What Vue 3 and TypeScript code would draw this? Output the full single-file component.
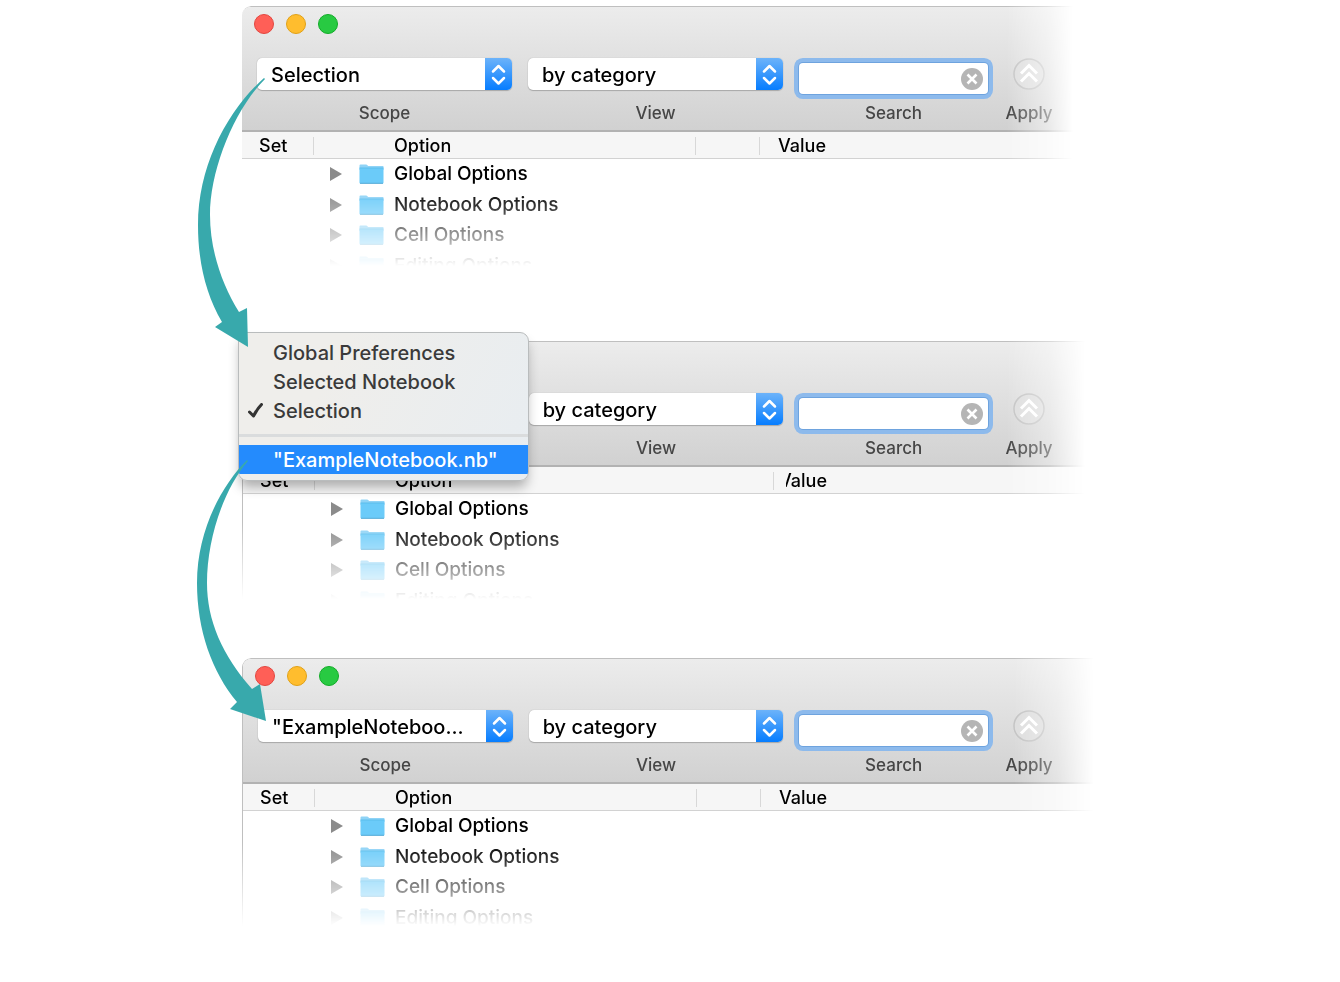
<script setup lang="ts">
interface PanelState {
  id: string
  kind: 'first' | 'second' | 'third'
  scope: string | null
}

const panels: PanelState[] = [
  { id: 'p1', kind: 'first', scope: 'Selection' },
  { id: 'p2', kind: 'second', scope: null },
  { id: 'p3', kind: 'third', scope: '"ExampleNoteboo...' },
]

const groups: string[] = ['Global Options', 'Notebook Options', 'Cell Options', 'Editing Options']
const scopes: string[] = ['Global Preferences', 'Selected Notebook', 'Selection']
</script>

<template>
  <main class="figure">
    <section v-for="p in panels" :key="p.id" class="step" :class="p.kind">
      <div class="window">
        <header class="toolbar">
          <div class="lights">
            <template v-if="p.scope">
              <button class="light red" type="button" aria-label="Close"></button>
              <button class="light yellow" type="button" aria-label="Minimize"></button>
              <button class="light green" type="button" aria-label="Zoom"></button>
            </template>
          </div>
          <div class="controls">
            <div class="control">
              <template v-if="p.scope">
                <div class="slot">
                  <div class="popup">
                    <select :id="p.id + '-scope'">
                      <option>{{ p.scope }}</option>
                    </select>
                    <svg class="stepper" viewBox="0 0 27 32" aria-hidden="true">
                      <path d="M8 13.500 13.500 8 19 13.500M8 20l5.500 5.500L19 20" />
                    </svg>
                  </div>
                </div>
                <label :for="p.id + '-scope'">Scope</label>
              </template>
            </div>
            <div class="control">
              <div class="slot">
                <div class="popup">
                  <select :id="p.id + '-view'">
                    <option>by category</option>
                  </select>
                  <svg class="stepper" viewBox="0 0 27 32" aria-hidden="true">
                    <path d="M8 13.500 13.500 8 19 13.500M8 20l5.500 5.500L19 20" />
                  </svg>
                </div>
              </div>
              <label :for="p.id + '-view'">View</label>
            </div>
            <div class="control">
              <div class="slot">
                <div class="search">
                  <input :id="p.id + '-search'" type="text" />
                  <button class="clear" type="button" aria-label="Clear">
                    <svg viewBox="0 0 22 22" aria-hidden="true">
                      <circle cx="11" cy="11" r="11" fill="#b5b5b5" />
                      <path d="M6.500 6.500l9 9M15.500 6.500l-9 9" stroke="#fff" stroke-width="2.600" />
                    </svg>
                  </button>
                </div>
              </div>
              <label :for="p.id + '-search'">Search</label>
            </div>
            <div class="control">
              <div class="slot">
                <button :id="p.id + '-apply'" class="apply" type="button">
                  <svg viewBox="0 0 32 32" aria-hidden="true">
                    <circle cx="16" cy="16" r="15" fill="#dedede" stroke="#c4c4c4" stroke-width="1.500" />
                    <path d="M8 15.500l8-8 8 8M8 23.500l8-8 8 8" fill="none" stroke="#fff" stroke-width="3" />
                  </svg>
                </button>
              </div>
              <label :for="p.id + '-apply'">Apply</label>
            </div>
          </div>
        </header>

        <table class="options">
          <colgroup>
            <col class="col-set" />
            <col :class="p.scope ? 'col-option' : 'col-option-wide'" />
            <col v-if="p.scope" class="col-gap" />
            <col />
          </colgroup>
          <thead>
            <tr>
              <th class="set">Set</th>
              <th class="option">Option</th>
              <th v-if="p.scope"></th>
              <th class="value"><span>Value</span></th>
            </tr>
          </thead>
          <tbody>
            <tr v-for="g in groups" :key="g">
              <td></td>
              <td :colspan="p.scope ? 3 : 2">
                <div class="entry">
                  <button class="disclose" type="button" :aria-label="'Expand ' + g">
                    <svg viewBox="0 0 12 14" aria-hidden="true"><path d="M0 0 12 7 0 14z" fill="#8b8b8b" /></svg>
                  </button>
                  <svg class="folder" viewBox="0 0 25 20" aria-hidden="true">
                    <path d="M.5 1.500Q.5.500 1.500.500H7q1 0 1.500.800l.500.700H24q.5 0 .5.700V6H.5z" fill="#8fd3f6" />
                    <rect x=".5" y="4" width="24" height="15.500" rx=".8" fill="#6bcbf9" />
                    <path d="M.5 4H24.500" stroke="#5bbdec" />
                    <path d="M1 19.300H24" stroke="#58acd6" />
                  </svg>
                  <span>{{ g }}</span>
                </div>
              </td>
            </tr>
          </tbody>
        </table>
      </div>

      <div v-if="!p.scope" class="menu" role="menu">
        <button
          v-for="s in scopes"
          :key="s"
          class="item"
          type="button"
          role="menuitemradio"
          :aria-checked="s === 'Selection'"
        >
          <span class="tick">
            <svg v-if="s === 'Selection'" viewBox="0 0 15 15" aria-hidden="true">
              <path d="M1.500 9 5.500 13Q9 6 13.500 1.500" fill="none" stroke="#333" stroke-width="3" stroke-linecap="round" stroke-linejoin="round" />
            </svg>
          </span>
          {{ s }}
        </button>
        <hr />
        <button class="item active" type="button" role="menuitemradio" aria-checked="false">
          <span class="tick"></span>"ExampleNotebook.nb"
        </button>
      </div>
    </section>

    <svg class="arrows" viewBox="0 0 100 740" aria-hidden="true">
      <g transform="translate(-180 0)" fill="#38a9ac">
        <path d="M264 78C228 110 198 165 198 225 198 262 206 295 222 322L215 327 248 347 247 308 239 312C222 285 210 250 210 215 210 170 234 110 265 79Z" />
        <path d="M247 460C222 485 197 530 197 583 197 630 212 672 237 702L230 709 266 721 260 684 252 689C222 655 207 620 207 583 207 540 223 490 248 461Z" />
      </g>
    </svg>
  </main>
</template>

<style>
body {
  margin: 0;
  background: #fff;
}
</style>

<style scoped>
.figure {
  position: relative;
  box-sizing: border-box;
  min-height: 100vh;
  padding: 6px 247px 40px 242px;
  font-family: Inter, 'Liberation Sans', sans-serif;
  font-size: 19px;
  font-weight: 450;
  color: #000;
}
.step {
  position: relative;
  min-width: 720px;
}
.second {
  margin-top: 60px;
}
.third {
  margin-top: 42px;
}
.window {
  box-sizing: border-box;
  border-top: 1px solid #bfbfbf;
  border-left: 1px solid #bfbfbf;
  border-radius: 9px 0 0 0;
  overflow: hidden;
  mask-image: linear-gradient(to right, #000 765px, rgba(0, 0, 0, 0.5) 805px, transparent 831px),
    linear-gradient(to bottom, #000 184px, transparent 260px);
  mask-composite: intersect;
}
.first .window {
  border-left: 0;
}
.second .window {
  mask-image: linear-gradient(to right, #000 765px, rgba(0, 0, 0, 0.6) 808px, transparent 843px),
    linear-gradient(to bottom, #000 182px, transparent 258px);
}
.third .window {
  mask-image: linear-gradient(to right, #000 772px, rgba(0, 0, 0, 0.6) 815px, transparent 852px),
    linear-gradient(to bottom, #000 185px, transparent 268px);
}
.toolbar {
  box-sizing: border-box;
  height: 125px;
  padding: 7px 39px 0 15px;
  border-bottom: 2px solid #b2b2b2;
  background: linear-gradient(#ececec, #d1d1d1);
}
.lights {
  display: flex;
  gap: 12px;
  height: 44px;
  margin-left: -3px;
}
.light {
  width: 20px;
  height: 20px;
  padding: 0;
  border: 1px solid;
  border-radius: 50%;
}
.red {
  background: #ff5f57;
  border-color: #e2463f;
}
.yellow {
  background: #ffbd2e;
  border-color: #e1a116;
}
.green {
  background: #28ca42;
  border-color: #12ac28;
}
.controls {
  display: grid;
  grid-template-columns: 255fr 255fr 189fr 50px;
  column-gap: 16px;
}
.control {
  min-width: 0;
  text-align: center;
}
.slot {
  height: 43px;
}
.control label {
  display: block;
  font-size: 17px;
  line-height: 24px;
  color: #464646;
}
.popup {
  display: grid;
  grid-template-columns: 1fr 27px;
  height: 32px;
  border-radius: 5px;
  background: #fff;
  box-shadow: 0 0 1px #a0a0a0, 0 1px 1px #a8a8a8;
  overflow: hidden;
}
.popup select {
  grid-area: 1 / 1 / 2 / 3;
  appearance: none;
  width: 100%;
  padding: 1px 30px 0 14px;
  border: 0;
  background: transparent;
  font: inherit;
  font-size: 20px;
  color: #000;
}
.stepper {
  grid-area: 1 / 2 / 2 / 3;
  width: 27px;
  height: 32px;
  background: linear-gradient(#6cb3fa, #067dff);
  pointer-events: none;
}
.stepper path {
  fill: none;
  stroke: #fff;
  stroke-width: 2.500;
  stroke-linecap: round;
  stroke-linejoin: round;
}
.search {
  display: flex;
  align-items: center;
  height: 31px;
  margin-top: 5px;
  padding-right: 5px;
  box-sizing: border-box;
  border-radius: 4px;
  background: #fff;
  box-shadow: 0 0 0 1px #6ea3de, 0 0 0 5px #8dbaec;
}
.slot:has(.search) {
  display: flow-root;
}
.search input {
  flex: 1;
  min-width: 0;
  padding: 0 6px;
  border: 0;
  outline: 0;
  background: transparent;
  font: inherit;
}
.clear,
.apply,
.disclose {
  display: block;
  padding: 0;
  border: 0;
  background: none;
}
.clear {
  width: 22px;
  height: 22px;
}
.apply {
  width: 32px;
  height: 32px;
  margin: 0 auto;
}
.clear svg,
.apply svg,
.disclose svg {
  display: block;
}
.options {
  width: 100%;
  table-layout: fixed;
  border-collapse: separate;
  border-spacing: 0;
}
.col-set {
  width: 72px;
}
.col-option {
  width: 382px;
}
.col-option-wide {
  width: 459px;
}
.col-gap {
  width: 64px;
}
.options th {
  height: 27px;
  box-sizing: border-box;
  padding: 2px 0 0;
  border-bottom: 1px solid #d2d2d2;
  background: linear-gradient(#d8d8d8, #d8d8d8) right 5px / 1px 18px no-repeat, #f6f6f6;
  font-size: 18px;
  font-weight: 450;
  line-height: 24px;
  text-align: left;
}
.options .set {
  padding-left: 17px;
}
.options .option {
  padding-left: 80px;
}
.options .value {
  padding-left: 18px;
  background: #f6f6f6;
}
.second .value {
  padding-left: 5px;
}
.second .value span {
  display: inline-block;
  clip-path: inset(0 0 0 7px);
}
.options td {
  height: 30px;
  padding: 0;
}
.options tr:nth-child(even) td {
  height: 31px;
}
.entry {
  display: flex;
  align-items: center;
  padding-left: 16px;
  line-height: 30px;
}
.disclose {
  width: 12px;
  height: 14px;
  margin-right: 17px;
}
.folder {
  width: 25px;
  height: 20px;
  margin-right: 10px;
}
.menu {
  position: absolute;
  top: -9px;
  left: -4px;
  box-sizing: border-box;
  width: 291px;
  padding: 5px 0 6px;
  border: 1px solid #b9bcbd;
  border-radius: 0 9px 9px 9px;
  background: linear-gradient(115deg, #efeeeb 30%, #e8edf1);
  box-shadow: 0 8px 12px -2px rgba(0, 0, 0, 0.3);
  overflow: hidden;
}
.item {
  display: flex;
  align-items: center;
  width: 100%;
  height: 29px;
  padding: 0 0 0 9px;
  border: 0;
  background: none;
  font: inherit;
  font-size: 20px;
  color: #3a3a3a;
  white-space: nowrap;
}
.item.active {
  background: #248bfd;
  color: #fff;
}
.tick {
  width: 15px;
  margin-right: 10px;
}
.tick svg {
  display: block;
  width: 15px;
  height: 15px;
}
.menu hr {
  height: 3px;
  margin: 9px 0 8px;
  border: 0;
  background: #dadcdd;
}
.arrows {
  position: absolute;
  top: 0;
  left: 180px;
  width: 100px;
  height: 740px;
  pointer-events: none;
}
</style>
